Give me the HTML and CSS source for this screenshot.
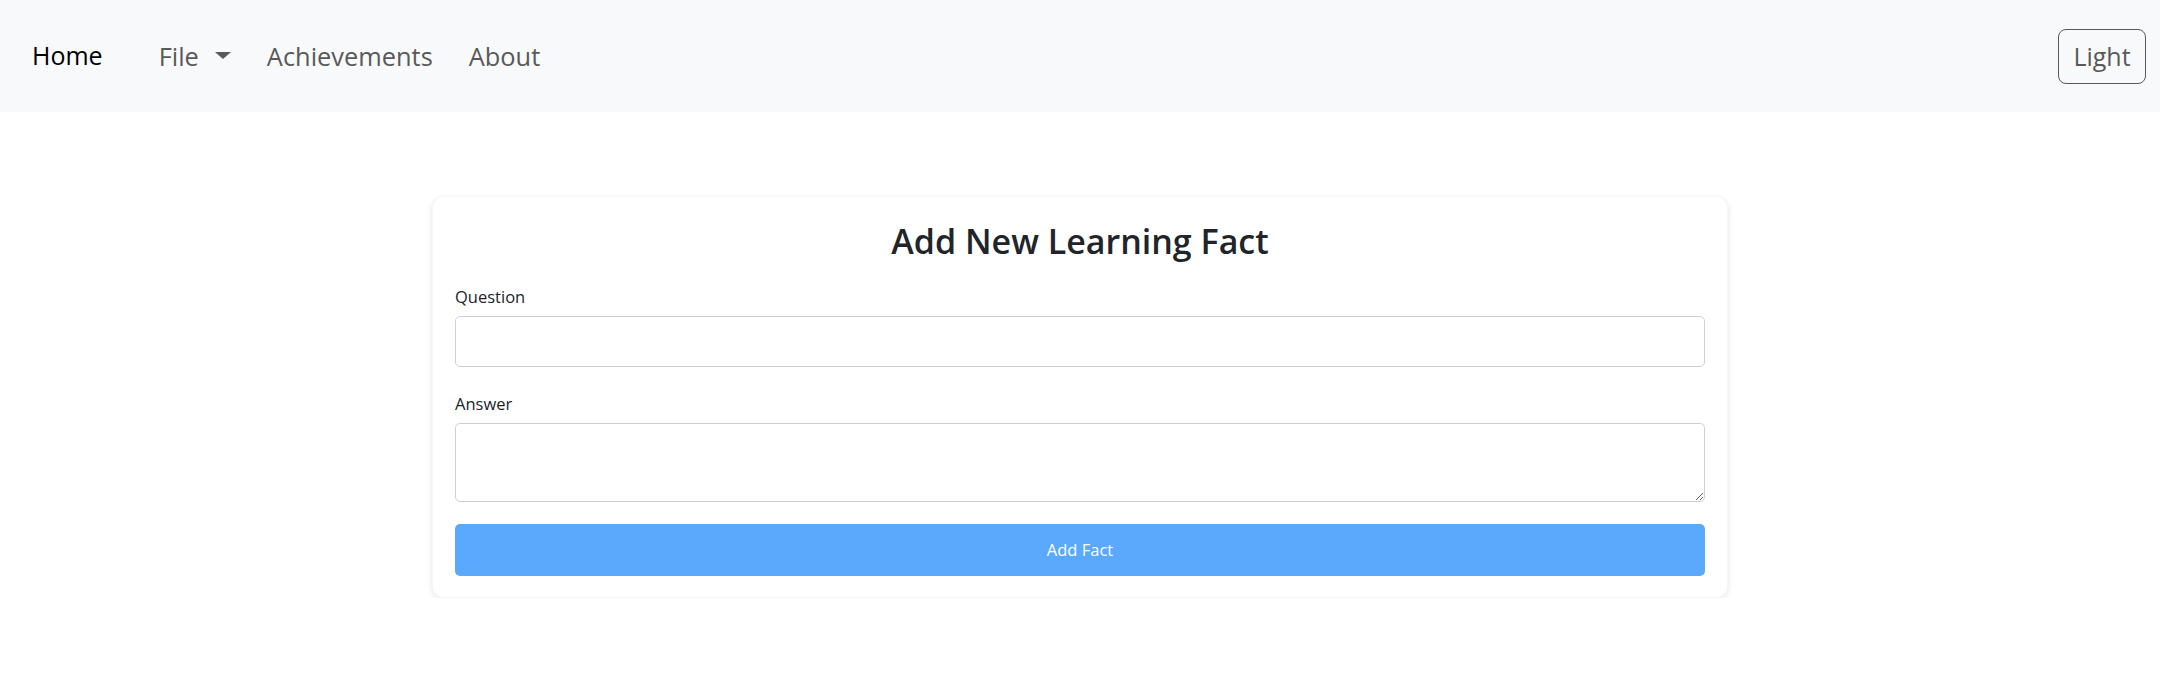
FILE: index.html
```html
<!DOCTYPE html>
<html lang="en">
<head>
<meta charset="utf-8">
<title>Add New Learning Fact</title>
<link rel="stylesheet" href="styles.css">
</head>
<body>
<nav class="navbar">
  <a class="brand" href="#">Home</a>
  <ul class="nav-links">
    <li><a class="nav-link dropdown" href="#">File<span class="caret"></span></a></li>
    <li><a class="nav-link" href="#">Achievements</a></li>
    <li><a class="nav-link" href="#">About</a></li>
  </ul>
  <button class="theme-btn" type="button">Light</button>
</nav>
<main class="main">
  <section class="card">
    <h3 class="card-title">Add New Learning Fact</h3>
    <form class="fact-form">
      <div class="form-group">
        <label class="form-label" for="q">Question</label>
        <input class="form-control input" id="q" type="text">
      </div>
      <div class="form-group">
        <label class="form-label" for="a">Answer</label>
        <textarea class="form-control textarea" id="a"></textarea>
      </div>
      <button class="submit-btn" type="button">Add Fact</button>
    </form>
  </section>
</main>
</body>
</html>
```
FILE: styles.css
```css
* { box-sizing: border-box; }
html, body { margin: 0; padding: 0; background: #fff; }
body {
  font-family: "Open Sans", "Noto Sans", "Liberation Sans", sans-serif;
  color: #212529;
}
a { text-decoration: none; }

.navbar {
  height: 112px;
  background: #f8f9fa;
  display: flex;
  align-items: center;
  padding: 0 14px 0 32px;
}
.brand {
  font-size: 25px;
  color: #000;
  margin-right: 38px;
  line-height: 1.5;
}
.nav-links {
  list-style: none;
  display: flex;
  margin: 0;
  padding: 0;
}
.nav-link {
  display: flex;
  align-items: center;
  padding: 0 18px;
  font-size: 25.4px;
  line-height: 1.5;
  color: #595959;
}
.caret {
  display: inline-block;
  width: 0;
  height: 0;
  margin-left: 16px;
  border-top: 7px solid #595959;
  border-left: 8px solid transparent;
  border-right: 8px solid transparent;
}
.theme-btn {
  margin-left: auto;
  width: 88px;
  height: 55px;
  border: 1px solid #595959;
  border-radius: 8px;
  background: transparent;
  color: #595959;
  font-family: inherit;
  font-size: 25px;
  padding: 0;
}

.main {
  display: flex;
  justify-content: center;
  padding-top: 84px;
}
.card {
  width: 1296px;
  background: #fff;
  border-radius: 12px;
  border: 1px solid rgba(0,0,0,0.03);
  box-shadow: 0 2px 6px rgba(0,0,0,0.1);
  padding: 22px 22px 21px 22px;
}
.card-title {
  margin: 2px 0 23px;
  text-align: center;
  font-size: 34px;
  font-weight: 600;
  line-height: 40px;
  color: #212529;
}
.form-group { margin-bottom: 24px; }
.form-label {
  display: block;
  font-size: 16.5px;
  line-height: 25px;
  margin-bottom: 7px;
  color: #212529;
}
.form-control {
  display: block;
  width: 100%;
  border: 1px solid #cfcfcf;
  border-radius: 5px;
  background: #fff;
  font-family: inherit;
  font-size: 16px;
  padding: 6px 12px;
  margin: 0;
}
.input { height: 51px; }
.textarea { height: 79px; resize: vertical; }
.fact-form .form-group:last-of-type { margin-bottom: 22px; }
.submit-btn {
  display: block;
  width: 100%;
  height: 52px;
  border: none;
  border-radius: 5px;
  background: #5aa9fd;
  color: #fff;
  font-family: inherit;
  font-size: 16.5px;
  padding: 0 0 2px;
}
```
